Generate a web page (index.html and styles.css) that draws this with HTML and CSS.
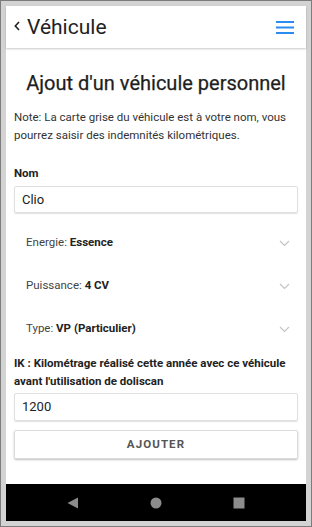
FILE: index.html
```html
<!DOCTYPE html>
<html lang="fr">
<head>
<meta charset="utf-8">
<title>Véhicule</title>
<link rel="stylesheet" href="styles.css">
</head>
<body>
<div class="frame">
  <div class="screen">
    <header class="header">
      <div class="back">
        <svg class="back-icon" width="6" height="10" viewBox="0 0 6 10"><polyline points="5,1 1.3,5 5,9" fill="none" stroke="#222" stroke-width="1.6"/></svg>
        <span class="title">Véhicule</span>
      </div>
      <svg class="burger" width="18" height="14" viewBox="0 0 18 14">
        <rect x="0" y="0" width="18" height="2" fill="#2b8cf0"/>
        <rect x="0" y="5.5" width="18" height="2" fill="#2b8cf0"/>
        <rect x="0" y="11" width="18" height="2" fill="#2b8cf0"/>
      </svg>
    </header>
    <main class="content">
      <h1 class="heading">Ajout d'un véhicule personnel</h1>
      <p class="note">Note: La carte grise du véhicule est à votre nom, vous pourrez saisir des indemnités kilométriques.</p>
      <label class="label">Nom</label>
      <div class="input">Clio</div>
      <div class="select"><span>Energie: <b>Essence</b></span><svg class="chev" width="11" height="7" viewBox="0 0 11 7"><polyline points="1,1 5.5,5.5 10,1" fill="none" stroke="#c4c4c4" stroke-width="1.2"/></svg></div>
      <div class="select"><span>Puissance: <b>4 CV</b></span><svg class="chev" width="11" height="7" viewBox="0 0 11 7"><polyline points="1,1 5.5,5.5 10,1" fill="none" stroke="#c4c4c4" stroke-width="1.2"/></svg></div>
      <div class="select"><span>Type: <b>VP (Particulier)</b></span><svg class="chev" width="11" height="7" viewBox="0 0 11 7"><polyline points="1,1 5.5,5.5 10,1" fill="none" stroke="#c4c4c4" stroke-width="1.2"/></svg></div>
      <label class="label ik">IK : Kilométrage réalisé cette année avec ce véhicule avant l'utilisation de doliscan</label>
      <div class="input km">1200</div>
      <div class="button">AJOUTER</div>
    </main>
    <nav class="navbar">
      <svg width="12" height="12" viewBox="0 0 12 12"><polygon points="11,0.5 11,11.5 0.5,6" fill="#8c8c8c"/></svg>
      <svg width="12" height="12" viewBox="0 0 12 12"><circle cx="6" cy="6" r="5.5" fill="#8c8c8c"/></svg>
      <svg width="12" height="12" viewBox="0 0 12 12"><rect x="0.5" y="0.5" width="11" height="11" fill="#8c8c8c"/></svg>
    </nav>
  </div>
</div>
</body>
</html>
```

FILE: styles.css
```css
* { box-sizing: border-box; }
html, body { margin: 0; padding: 0; }
body { font-family: Roboto, "Noto Sans", Arial, sans-serif; color: #222; }

.frame {
  width: 312px;
  height: 527px;
  border: 1px solid #7c7c7c;
  background: #d3d3d3;
  padding: 5px;
}
.screen {
  height: 100%;
  background: #fff;
  display: flex;
  flex-direction: column;
}
.header {
  height: 42px;
  flex: none;
  display: flex;
  align-items: center;
  justify-content: space-between;
  padding: 0 12px 0 8px;
  box-shadow: 0 1px 2px rgba(0,0,0,0.22);
  position: relative;
  z-index: 1;
}
.back { display: flex; align-items: center; }
.back-icon { margin-top: -2px; }
.title {
  font-size: 21px;
  margin-left: 7px;
  color: #222;
  line-height: 26px;
}
.burger { margin-top: 1px; }

.content {
  flex: 1;
  padding: 23px 8px 0;
}
.heading {
  margin: 0;
  font-size: 20px;
  line-height: 24px;
  font-weight: 400;
  text-align: center;
  color: #1e1e1e;
  -webkit-text-stroke: 0.25px #1e1e1e;
}
.note {
  margin: 13px 0 0;
  font-size: 11.5px;
  line-height: 18px;
  color: #333;
}
.label {
  display: block;
  margin-top: 21px;
  font-size: 11.5px;
  line-height: 16px;
  font-weight: 700;
  color: #222;
}
.input {
  margin-top: 5px;
  height: 27px;
  border: 1px solid #e0e0e0;
  border-radius: 2px;
  box-shadow: 0 1px 1px rgba(0,0,0,0.12);
  padding-left: 7px;
  font-size: 13px;
  line-height: 25px;
  color: #222;
}
.select {
  height: 43px;
  display: flex;
  align-items: center;
  justify-content: space-between;
  padding: 0 8px 0 12px;
  font-size: 11.5px;
  color: #444;
}
.input + .select { margin-top: 7px; }
.select b { color: #222; }
.chev { margin-top: 4px; }
.label.ik {
  margin-top: 5px;
  line-height: 18px;
}
.input.km {
  margin-top: 3px;
  height: 28px;
  line-height: 26px;
}
.button {
  margin-top: 9px;
  height: 29px;
  border: 1px solid #dcdcdc;
  border-radius: 2px;
  box-shadow: 0 1px 2px rgba(0,0,0,0.25);
  text-align: center;
  font-size: 11.5px;
  line-height: 27px;
  font-weight: 700;
  letter-spacing: 1.1px;
  color: #555;
}
.navbar {
  height: 37px;
  flex: none;
  background: #000;
  display: flex;
  align-items: center;
  padding: 0 61px;
  justify-content: space-between;
}
```
